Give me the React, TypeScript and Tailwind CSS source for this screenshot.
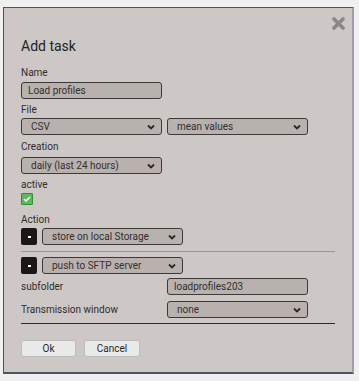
function Chevron() {
  return (
    <svg width="8" height="6" viewBox="0 0 8 6" className="shrink-0">
      <path d="M1 1.5 L4 4.5 L7 1.5" fill="none" stroke="#2a2626" strokeWidth="1.8" />
    </svg>
  );
}

function Select({ value, w = "w-[141px]" }: { value: string; w?: string }) {
  return (
    <div
      className={`${w} h-[17px] flex items-center justify-between pl-[9px] pr-[6px] bg-[#b9b1ae] border border-[#3e3a3a] rounded-[3px] text-[10px] text-[#332f2f]`}
    >
      <span>{value}</span>
      <Chevron />
    </div>
  );
}

function Input({ value }: { value: string }) {
  return (
    <div className="w-[141px] h-[17px] flex items-center pl-[6px] bg-[#b9b1ae] border border-[#3e3a3a] rounded-[3px] text-[10px] text-[#332f2f]">
      {value}
    </div>
  );
}

function Label({ children, className = "" }: { children: string; className?: string }) {
  return <div className={`text-[10px] leading-[12px] text-[#302c2c] ${className}`}>{children}</div>;
}

function MinusButton() {
  return (
    <div className="w-[16px] h-[17px] flex items-center justify-center bg-[#1c1717] rounded-[2px]">
      <div className="w-[3px] h-[2px] bg-white" />
    </div>
  );
}

export default function App() {
  return (
    <div className="w-[359px] h-[381px] bg-[#f0f0f0] pt-[7px] pl-[3px] font-['Roboto',sans-serif]">
      <div className="relative w-[351px] h-[367px] bg-[#cdc8c5] border border-[#4d5163] border-r-[2px] border-r-[#9c9eae] border-b-[2px] pl-[17px] pt-[30px]">
        <svg className="absolute right-[7px] top-[9px]" width="13" height="13" viewBox="0 0 13 13">
          <path d="M2 2 L11 11 M11 2 L2 11" stroke="#8c8787" strokeWidth="3.6" strokeLinecap="round" />
        </svg>
        <div className="text-[14px] leading-[16px] text-[#222]">Add task</div>

        <Label className="mt-[13px]">Name</Label>
        <div className="mt-[3px]">
          <Input value="Load profiles" />
        </div>

        <Label className="mt-[5px]">File</Label>
        <div className="mt-[2px] flex gap-[5px]">
          <Select value="CSV" />
          <Select value="mean values" />
        </div>

        <Label className="mt-[6px]">Creation</Label>
        <div className="mt-[4px]">
          <Select value="daily (last 24 hours)" />
        </div>

        <Label className="mt-[5px]">active</Label>
        <div className="mt-[2px] w-[12px] h-[12px] flex items-center justify-center bg-[#5cb85c] border border-[#3d8a3d] rounded-[1px]">
          <svg width="8" height="6" viewBox="0 0 8 6">
            <path d="M1 3 L3 5 L7 1" fill="none" stroke="white" strokeWidth="1.5" />
          </svg>
        </div>

        <Label className="mt-[9px]">Action</Label>
        <div className="mt-[2px] flex gap-[5px] items-center">
          <MinusButton />
          <Select value="store on local Storage" />
        </div>
        <div className="mt-[6px] mb-[5px] w-[314px] h-px bg-[#9b9595]" />
        <div className="flex gap-[5px] items-center">
          <MinusButton />
          <Select value="push to SFTP server" />
        </div>

        <div className="mt-[4px] flex items-center">
          <Label className="w-[146px]">subfolder</Label>
          <Input value="loadprofiles203" />
        </div>
        <div className="mt-[6px] flex items-center">
          <Label className="w-[146px]">Transmission window</Label>
          <Select value="none" />
        </div>
        <div className="mt-[5px] w-[314px] h-px bg-[#2e2a2a]" />

        <div className="mt-[16px] flex gap-[8px]">
          <div className="w-[55px] h-[17px] flex items-center justify-center bg-[#e9e9e9] border border-[#bdbdbd] rounded-[3px] text-[10px] text-[#2b2727]">
            Ok
          </div>
          <div className="w-[56px] h-[17px] flex items-center justify-center bg-[#e9e9e9] border border-[#bdbdbd] rounded-[3px] text-[10px] text-[#2b2727]">
            Cancel
          </div>
        </div>
      </div>
    </div>
  );
}
